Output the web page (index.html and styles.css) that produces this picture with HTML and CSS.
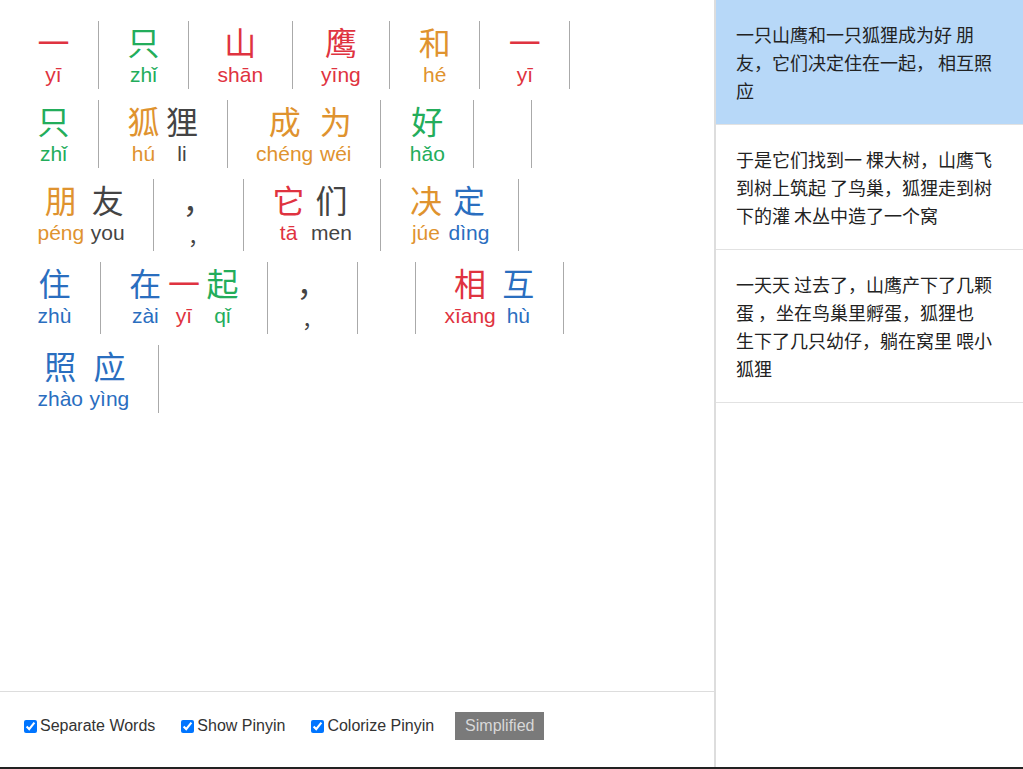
FILE: index.html
```html
<!DOCTYPE html>
<html lang="zh">
<head>
<meta charset="utf-8">
<title>Reader</title>
<link rel="stylesheet" href="styles.css">
</head>
<body>
<div class="app">
  <main class="reader">
    <div class="passage">
      <div class="word"><div class="syl t1"><span class="hz">一</span><span class="py">yī</span></div></div>
      <div class="word"><div class="syl t3"><span class="hz">只</span><span class="py">zhǐ</span></div></div>
      <div class="word"><div class="syl t1"><span class="hz">山</span><span class="py">shān</span></div></div>
      <div class="word"><div class="syl t1"><span class="hz">鹰</span><span class="py">yīng</span></div></div>
      <div class="word"><div class="syl t2"><span class="hz">和</span><span class="py">hé</span></div></div>
      <div class="word"><div class="syl t1"><span class="hz">一</span><span class="py">yī</span></div></div>

      <div class="word"><div class="syl t3"><span class="hz">只</span><span class="py">zhǐ</span></div></div>
      <div class="word"><div class="syl t2"><span class="hz">狐</span><span class="py">hú</span></div><div class="syl t5"><span class="hz">狸</span><span class="py">li</span></div></div>
      <div class="word"><div class="syl t2"><span class="hz">成</span><span class="py">chéng</span></div><div class="syl t2"><span class="hz">为</span><span class="py">wéi</span></div></div>
      <div class="word"><div class="syl t3"><span class="hz">好</span><span class="py">hǎo</span></div></div>
      <div class="word word-empty"></div>

      <div class="word"><div class="syl t2"><span class="hz">朋</span><span class="py">péng</span></div><div class="syl t5"><span class="hz">友</span><span class="py">you</span></div></div>
      <div class="word"><div class="syl t5 punct"><span class="hz">，</span><span class="py">，</span></div></div>
      <div class="word"><div class="syl t1"><span class="hz">它</span><span class="py">tā</span></div><div class="syl t5"><span class="hz">们</span><span class="py">men</span></div></div>
      <div class="word"><div class="syl t2"><span class="hz">决</span><span class="py">júe</span></div><div class="syl t4"><span class="hz">定</span><span class="py">dìng</span></div></div>

      <div class="word"><div class="syl t4"><span class="hz">住</span><span class="py">zhù</span></div></div>
      <div class="word"><div class="syl t4"><span class="hz">在</span><span class="py">zài</span></div><div class="syl t1"><span class="hz">一</span><span class="py">yī</span></div><div class="syl t3"><span class="hz">起</span><span class="py">qǐ</span></div></div>
      <div class="word"><div class="syl t5 punct"><span class="hz">，</span><span class="py">，</span></div></div>
      <div class="word word-empty"></div>
      <div class="word"><div class="syl t1"><span class="hz">相</span><span class="py">xīang</span></div><div class="syl t4"><span class="hz">互</span><span class="py">hù</span></div></div>

      <div class="word"><div class="syl t4"><span class="hz">照</span><span class="py">zhào</span></div><div class="syl t4"><span class="hz">应</span><span class="py">yìng</span></div></div>
    </div>

    <footer class="controls">
      <label class="opt"><input type="checkbox" checked><span>Separate Words</span></label>
      <label class="opt"><input type="checkbox" checked><span>Show Pinyin</span></label>
      <label class="opt"><input type="checkbox" checked><span>Colorize Pinyin</span></label>
      <button class="script-btn" type="button">Simplified</button>
    </footer>
  </main>

  <aside class="sentences">
    <div class="sentence active">一只山鹰和一只狐狸成为好 朋友，它们决定住在一起， 相互照应</div>
    <div class="sentence">于是它们找到一 棵大树，山鹰飞到树上筑起 了鸟巢，狐狸走到树下的灌 木丛中造了一个窝</div>
    <div class="sentence">一天天 过去了，山鹰产下了几颗蛋 ，坐在鸟巢里孵蛋，狐狸也<br>生下了几只幼仔，躺在窝里 喂小狐狸</div>
  </aside>
</div>
</body>
</html>
```

FILE: styles.css
```css
html, body {
  margin: 0;
  padding: 0;
  background: #fff;
}

body {
  font-family: "Liberation Sans", Arial, sans-serif;
  color: #333;
}

.app {
  display: flex;
  height: 767px;
  border-bottom: 2px solid #222;
  overflow: hidden;
}

/* ---------- left reader ---------- */
.reader {
  width: 714px;
  flex: none;
  border-right: 2px solid #ddd;
  display: flex;
  flex-direction: column;
}

.passage {
  flex: 1;
  width: 595px;
  padding: 21px 0 0 9px;
  display: flex;
  flex-wrap: wrap;
  align-content: flex-start;
  row-gap: 11px;
}

.word {
  display: flex;
  gap: 6.5px;
  padding: 0 28.5px;
  border-right: 1px solid #aaa;
}

.word-empty {
  min-height: 68px;
}

.syl {
  display: flex;
  flex-direction: column;
  align-items: center;
  min-width: 32px;
}

.hz {
  font-family: "Noto Sans CJK SC", sans-serif;
  font-size: 32px;
  line-height: 40px;
}

.py {
  font-family: "Liberation Sans", Arial, sans-serif;
  font-size: 21px;
  line-height: 28px;
  white-space: nowrap;
}

.punct .py {
  font-family: "Noto Sans CJK SC", sans-serif;
  line-height: 32px;
}

.t1 { color: #df3340; }
.t2 { color: #df932f; }
.t3 { color: #23ad5b; }
.t4 { color: #2a6ebf; }
.t5 { color: #444; }

/* ---------- footer controls ---------- */
.controls {
  flex: none;
  height: 76px;
  box-sizing: border-box;
  border-top: 1px solid #ddd;
  padding: 20px 20px 0;
  display: flex;
  align-items: flex-start;
  gap: 22px;
  font-size: 16px;
  color: #333;
}

.opt {
  display: flex;
  align-items: center;
  height: 28px;
}

.opt input {
  margin: 3px 3px 3px 4px;
}

.script-btn {
  height: 28px;
  padding: 0 10px;
  margin-left: -1px;
  border: none;
  background: #7a7a7a;
  color: #d8d8d8;
  font-family: "Liberation Sans", Arial, sans-serif;
  font-size: 16px;
}

/* ---------- right sentence list ---------- */
.sentences {
  flex: 1;
}

.sentence {
  padding: 20px;
  font-family: "Noto Sans CJK SC", sans-serif;
  font-size: 18px;
  line-height: 28px;
  color: #222;
  border-bottom: 1px solid #e2e2e2;
}

.sentence.active {
  background: #b7d8f8;
}
```
